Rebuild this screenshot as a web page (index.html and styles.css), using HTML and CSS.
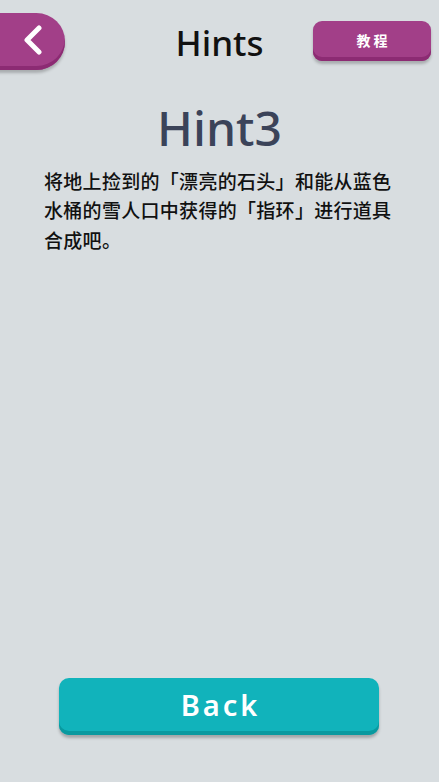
FILE: index.html
```html
<!DOCTYPE html>
<html lang="zh-CN">
<head>
    <meta charset="UTF-8">
    <meta name="viewport" content="width=device-width, initial-scale=1.0">
    <title>Hints</title>
    <link rel="stylesheet" href="styles.css">
</head>
<body>

    <div class="page">
        <header class="top-bar">
            <button class="back-tab" aria-label="返回">
                <svg width="22" height="30" viewBox="0 0 22 30">
                    <path d="M17 3 L5 15 L17 27" fill="none" stroke="#fff" stroke-width="5" stroke-linecap="round" stroke-linejoin="round"/>
                </svg>
            </button>
            <h1 class="title">Hints</h1>
            <button class="tutorial-btn">教程</button>
        </header>

        <h2 class="hint-name">Hint3</h2>
        <p class="hint-text">将地上捡到的「漂亮的石头」和能从蓝色水桶的雪人口中获得的「指环」进行道具合成吧。</p>

        <button class="back-btn">Back</button>
    </div>

</body>
</html>
```

FILE: styles.css
```css
body {
    margin: 0;
    padding: 0;
    background-color: #d8dde0;
    font-family: "Noto Sans", "Noto Sans CJK SC", sans-serif;
}

.page {
    display: flex;
    flex-direction: column;
    min-height: 782px;
    box-sizing: border-box;
    padding-bottom: 47px;
}

.top-bar {
    display: grid;
    grid-template-columns: 1fr auto 1fr;
    align-items: start;
}

button {
    font-family: inherit;
    border: none;
    cursor: pointer;
    color: white;
}

.back-tab {
    justify-self: start;
    margin-top: 13px;
    margin-left: -30px;
    width: 95px;
    height: 57px;
    padding: 0 0 4px 30px;
    background: #a23f88;
    border-radius: 0 29px 29px 0;
    box-shadow: inset 0 -4px 0 #8c2b73, 0 3px 3px rgba(0, 0, 0, 0.22);
    display: flex;
    align-items: center;
    justify-content: center;
}

.title {
    margin: 19px 0 0;
    font-size: 35px;
    font-weight: 500;
    color: #111;
    line-height: 48px;
}

.tutorial-btn {
    justify-self: end;
    margin-top: 21px;
    margin-right: 8px;
    width: 118px;
    height: 40px;
    padding: 0 0 3px;
    background: #a23f88;
    border-radius: 9px;
    box-shadow: inset 0 -4px 0 #8c2b73, 0 3px 3px rgba(0, 0, 0, 0.22);
    font-size: 14px;
    font-weight: bold;
    letter-spacing: 3px;
    text-indent: 3px;
}

.hint-name {
    margin: 28px 0 0;
    text-align: center;
    font-size: 48px;
    font-weight: 500;
    line-height: 60px;
    color: #3b4359;
}

.hint-text {
    flex: 1;
    margin: 10px 0 0;
    padding: 0 44px;
    font-size: 19px;
    font-weight: 500;
    line-height: 29.3px;
    letter-spacing: 0.3px;
    color: #111;
}

.back-btn {
    align-self: center;
    margin-right: 1px;
    width: 320px;
    height: 57px;
    padding: 0 0 4px;
    background: #11b3bb;
    border-radius: 10px;
    box-shadow: inset 0 -4px 0 #09999f, 0 3px 3px rgba(0, 0, 0, 0.25);
    font-size: 29px;
    font-weight: 600;
    letter-spacing: 3px;
    text-indent: 3px;
}
```
